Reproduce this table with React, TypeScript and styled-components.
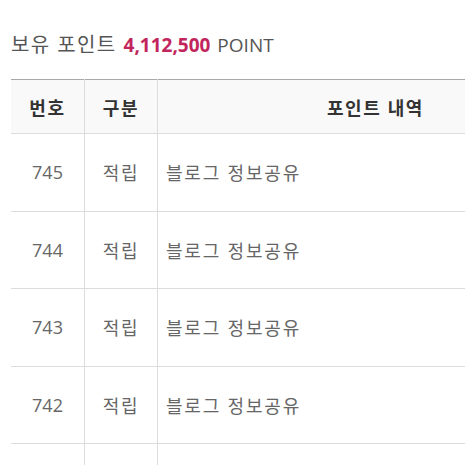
import React from 'react'
import styled, { createGlobalStyle } from 'styled-components'

const GlobalStyle = createGlobalStyle`
  html, body {
    margin: 0;
    padding: 0;
    background: #fff;
    overflow: hidden;
  }
  body {
    font-family: "Open Sans", "Noto Sans CJK KR", sans-serif;
  }
`

const Page = styled.div`
  padding: 30px 0 0 11px;
  width: 600px;
`

const Summary = styled.div`
  font-size: 19px;
  line-height: 30px;
  color: #555;
  margin-bottom: 19px;
`

const Label = styled.span`
  font-size: 20px;
  letter-spacing: 1.4px;
`

const Amount = styled.strong`
  color: #c2255c;
  font-weight: 700;
  margin: 0 2px;
`

const Table = styled.table`
  width: 582px;
  border-collapse: collapse;
  table-layout: fixed;
  border-top: 1px solid #a8a8a8;
`

const Th = styled.th<{ $w?: number }>`
  width: ${(p) => (p.$w ? `${p.$w}px` : 'auto')};
  height: 53px;
  background: #f9f9f9;
  color: #333;
  font-size: 18px;
  font-weight: 700;
  letter-spacing: 1.6px;
  text-align: center;
  border-bottom: 1px solid #dcdcdc;
  border-left: 1px solid #dcdcdc;
  padding: 0;
  &:first-child {
    border-left: none;
  }
`

const Td = styled.td<{ $left?: boolean; $ko?: boolean }>`
  height: 76.5px;
  color: #666;
  font-size: 18px;
  letter-spacing: ${(p) => (p.$ko ? '1.8px' : '0')};
  text-align: ${(p) => (p.$left ? 'left' : 'center')};
  padding: 0 0 0 ${(p) => (p.$left ? '8px' : '0')};
  border-bottom: 1px solid #dcdcdc;
  border-left: 1px solid #dcdcdc;
  &:first-child {
    border-left: none;
  }
`

const rows = [
  { no: 745, type: '적립', desc: '블로그 정보공유' },
  { no: 744, type: '적립', desc: '블로그 정보공유' },
  { no: 743, type: '적립', desc: '블로그 정보공유' },
  { no: 742, type: '적립', desc: '블로그 정보공유' },
  { no: 741, type: '적립', desc: '블로그 정보공유' },
]

export default function App() {
  return (
    <>
      <GlobalStyle />
      <Page>
        <Summary>
          <Label>보유 포인트</Label> <Amount>4,112,500</Amount> POINT
        </Summary>
        <Table>
          <thead>
            <tr>
              <Th $w={73}>번호</Th>
              <Th $w={72}>구분</Th>
              <Th>포인트 내역</Th>
            </tr>
          </thead>
          <tbody>
            {rows.map((r) => (
              <tr key={r.no}>
                <Td>{r.no}</Td>
                <Td $ko>{r.type}</Td>
                <Td $ko $left>{r.desc}</Td>
              </tr>
            ))}
          </tbody>
        </Table>
      </Page>
    </>
  )
}
